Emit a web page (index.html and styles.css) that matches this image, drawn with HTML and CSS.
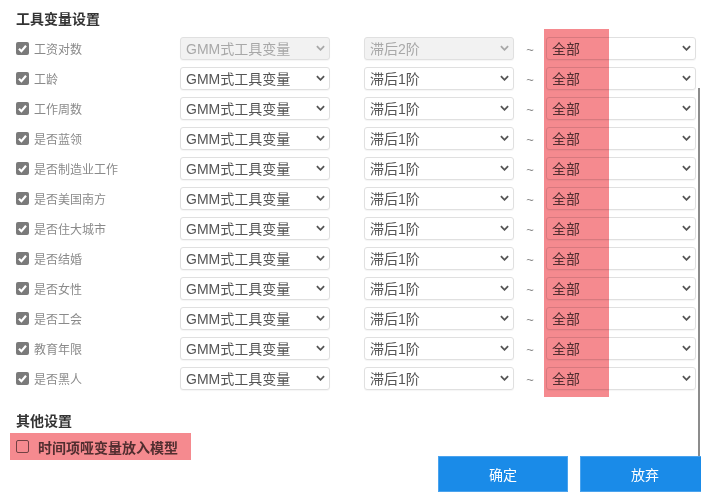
FILE: index.html
```html
<!DOCTYPE html>
<html lang="zh">
<head>
<meta charset="utf-8">
<link rel="stylesheet" href="styles.css">
</head>
<body>
<div class="page">
  <div class="panel">
    <div class="title">工具变量设置</div>
    <div class="rows">
      <div class="row">
        <label class="chk"><span class="box on"><svg viewBox="0 0 13 13"><path d="M3 6.8 L5.4 9.2 L10 3.8" /></svg></span><span class="lbl">工资对数</span></label>
        <div class="sel dis"><span>GMM式工具变量</span><svg class="chev" viewBox="0 0 10 6"><path d="M1 1 L5 5 L9 1"/></svg></div>
        <div class="gap"></div>
        <div class="sel dis"><span>滞后2阶</span><svg class="chev" viewBox="0 0 10 6"><path d="M1 1 L5 5 L9 1"/></svg></div>
        <div class="tilde">~</div>
        <div class="sel"><span>全部</span><svg class="chev" viewBox="0 0 10 6"><path d="M1 1 L5 5 L9 1"/></svg></div>
      </div>
      <div class="row">
        <label class="chk"><span class="box on"><svg viewBox="0 0 13 13"><path d="M3 6.8 L5.4 9.2 L10 3.8" /></svg></span><span class="lbl">工龄</span></label>
        <div class="sel"><span>GMM式工具变量</span><svg class="chev" viewBox="0 0 10 6"><path d="M1 1 L5 5 L9 1"/></svg></div>
        <div class="gap"></div>
        <div class="sel"><span>滞后1阶</span><svg class="chev" viewBox="0 0 10 6"><path d="M1 1 L5 5 L9 1"/></svg></div>
        <div class="tilde">~</div>
        <div class="sel"><span>全部</span><svg class="chev" viewBox="0 0 10 6"><path d="M1 1 L5 5 L9 1"/></svg></div>
      </div>
      <div class="row">
        <label class="chk"><span class="box on"><svg viewBox="0 0 13 13"><path d="M3 6.8 L5.4 9.2 L10 3.8" /></svg></span><span class="lbl">工作周数</span></label>
        <div class="sel"><span>GMM式工具变量</span><svg class="chev" viewBox="0 0 10 6"><path d="M1 1 L5 5 L9 1"/></svg></div>
        <div class="gap"></div>
        <div class="sel"><span>滞后1阶</span><svg class="chev" viewBox="0 0 10 6"><path d="M1 1 L5 5 L9 1"/></svg></div>
        <div class="tilde">~</div>
        <div class="sel"><span>全部</span><svg class="chev" viewBox="0 0 10 6"><path d="M1 1 L5 5 L9 1"/></svg></div>
      </div>
      <div class="row">
        <label class="chk"><span class="box on"><svg viewBox="0 0 13 13"><path d="M3 6.8 L5.4 9.2 L10 3.8" /></svg></span><span class="lbl">是否蓝领</span></label>
        <div class="sel"><span>GMM式工具变量</span><svg class="chev" viewBox="0 0 10 6"><path d="M1 1 L5 5 L9 1"/></svg></div>
        <div class="gap"></div>
        <div class="sel"><span>滞后1阶</span><svg class="chev" viewBox="0 0 10 6"><path d="M1 1 L5 5 L9 1"/></svg></div>
        <div class="tilde">~</div>
        <div class="sel"><span>全部</span><svg class="chev" viewBox="0 0 10 6"><path d="M1 1 L5 5 L9 1"/></svg></div>
      </div>
      <div class="row">
        <label class="chk"><span class="box on"><svg viewBox="0 0 13 13"><path d="M3 6.8 L5.4 9.2 L10 3.8" /></svg></span><span class="lbl">是否制造业工作</span></label>
        <div class="sel"><span>GMM式工具变量</span><svg class="chev" viewBox="0 0 10 6"><path d="M1 1 L5 5 L9 1"/></svg></div>
        <div class="gap"></div>
        <div class="sel"><span>滞后1阶</span><svg class="chev" viewBox="0 0 10 6"><path d="M1 1 L5 5 L9 1"/></svg></div>
        <div class="tilde">~</div>
        <div class="sel"><span>全部</span><svg class="chev" viewBox="0 0 10 6"><path d="M1 1 L5 5 L9 1"/></svg></div>
      </div>
      <div class="row">
        <label class="chk"><span class="box on"><svg viewBox="0 0 13 13"><path d="M3 6.8 L5.4 9.2 L10 3.8" /></svg></span><span class="lbl">是否美国南方</span></label>
        <div class="sel"><span>GMM式工具变量</span><svg class="chev" viewBox="0 0 10 6"><path d="M1 1 L5 5 L9 1"/></svg></div>
        <div class="gap"></div>
        <div class="sel"><span>滞后1阶</span><svg class="chev" viewBox="0 0 10 6"><path d="M1 1 L5 5 L9 1"/></svg></div>
        <div class="tilde">~</div>
        <div class="sel"><span>全部</span><svg class="chev" viewBox="0 0 10 6"><path d="M1 1 L5 5 L9 1"/></svg></div>
      </div>
      <div class="row">
        <label class="chk"><span class="box on"><svg viewBox="0 0 13 13"><path d="M3 6.8 L5.4 9.2 L10 3.8" /></svg></span><span class="lbl">是否住大城市</span></label>
        <div class="sel"><span>GMM式工具变量</span><svg class="chev" viewBox="0 0 10 6"><path d="M1 1 L5 5 L9 1"/></svg></div>
        <div class="gap"></div>
        <div class="sel"><span>滞后1阶</span><svg class="chev" viewBox="0 0 10 6"><path d="M1 1 L5 5 L9 1"/></svg></div>
        <div class="tilde">~</div>
        <div class="sel"><span>全部</span><svg class="chev" viewBox="0 0 10 6"><path d="M1 1 L5 5 L9 1"/></svg></div>
      </div>
      <div class="row">
        <label class="chk"><span class="box on"><svg viewBox="0 0 13 13"><path d="M3 6.8 L5.4 9.2 L10 3.8" /></svg></span><span class="lbl">是否结婚</span></label>
        <div class="sel"><span>GMM式工具变量</span><svg class="chev" viewBox="0 0 10 6"><path d="M1 1 L5 5 L9 1"/></svg></div>
        <div class="gap"></div>
        <div class="sel"><span>滞后1阶</span><svg class="chev" viewBox="0 0 10 6"><path d="M1 1 L5 5 L9 1"/></svg></div>
        <div class="tilde">~</div>
        <div class="sel"><span>全部</span><svg class="chev" viewBox="0 0 10 6"><path d="M1 1 L5 5 L9 1"/></svg></div>
      </div>
      <div class="row">
        <label class="chk"><span class="box on"><svg viewBox="0 0 13 13"><path d="M3 6.8 L5.4 9.2 L10 3.8" /></svg></span><span class="lbl">是否女性</span></label>
        <div class="sel"><span>GMM式工具变量</span><svg class="chev" viewBox="0 0 10 6"><path d="M1 1 L5 5 L9 1"/></svg></div>
        <div class="gap"></div>
        <div class="sel"><span>滞后1阶</span><svg class="chev" viewBox="0 0 10 6"><path d="M1 1 L5 5 L9 1"/></svg></div>
        <div class="tilde">~</div>
        <div class="sel"><span>全部</span><svg class="chev" viewBox="0 0 10 6"><path d="M1 1 L5 5 L9 1"/></svg></div>
      </div>
      <div class="row">
        <label class="chk"><span class="box on"><svg viewBox="0 0 13 13"><path d="M3 6.8 L5.4 9.2 L10 3.8" /></svg></span><span class="lbl">是否工会</span></label>
        <div class="sel"><span>GMM式工具变量</span><svg class="chev" viewBox="0 0 10 6"><path d="M1 1 L5 5 L9 1"/></svg></div>
        <div class="gap"></div>
        <div class="sel"><span>滞后1阶</span><svg class="chev" viewBox="0 0 10 6"><path d="M1 1 L5 5 L9 1"/></svg></div>
        <div class="tilde">~</div>
        <div class="sel"><span>全部</span><svg class="chev" viewBox="0 0 10 6"><path d="M1 1 L5 5 L9 1"/></svg></div>
      </div>
      <div class="row">
        <label class="chk"><span class="box on"><svg viewBox="0 0 13 13"><path d="M3 6.8 L5.4 9.2 L10 3.8" /></svg></span><span class="lbl">教育年限</span></label>
        <div class="sel"><span>GMM式工具变量</span><svg class="chev" viewBox="0 0 10 6"><path d="M1 1 L5 5 L9 1"/></svg></div>
        <div class="gap"></div>
        <div class="sel"><span>滞后1阶</span><svg class="chev" viewBox="0 0 10 6"><path d="M1 1 L5 5 L9 1"/></svg></div>
        <div class="tilde">~</div>
        <div class="sel"><span>全部</span><svg class="chev" viewBox="0 0 10 6"><path d="M1 1 L5 5 L9 1"/></svg></div>
      </div>
      <div class="row">
        <label class="chk"><span class="box on"><svg viewBox="0 0 13 13"><path d="M3 6.8 L5.4 9.2 L10 3.8" /></svg></span><span class="lbl">是否黑人</span></label>
        <div class="sel"><span>GMM式工具变量</span><svg class="chev" viewBox="0 0 10 6"><path d="M1 1 L5 5 L9 1"/></svg></div>
        <div class="gap"></div>
        <div class="sel"><span>滞后1阶</span><svg class="chev" viewBox="0 0 10 6"><path d="M1 1 L5 5 L9 1"/></svg></div>
        <div class="tilde">~</div>
        <div class="sel"><span>全部</span><svg class="chev" viewBox="0 0 10 6"><path d="M1 1 L5 5 L9 1"/></svg></div>
      </div>
    </div>
    <div class="title other">其他设置</div>
    <div class="hl">
      <span class="box off"></span><span class="hl-text">时间项哑变量放入模型</span>
    </div>
  </div>
  <div class="mark"></div>
  <div class="scrollbar"></div>
  <div class="footer">
    <button class="btn">确定</button>
    <button class="btn">放弃</button>
  </div>
</div>
</body>
</html>
```

FILE: styles.css
```css
html, body {
  margin: 0;
  padding: 0;
  background: #fff;
}
body {
  width: 701px;
  height: 494px;
  overflow: hidden;
  font-family: "Liberation Sans", "Noto Sans CJK SC", sans-serif;
}
.page {
  position: relative;
  width: 701px;
  height: 494px;
  overflow: hidden;
  isolation: isolate;
}
.panel {
  padding: 10px 0 0 16px;
}
.title {
  font-size: 14px;
  font-weight: bold;
  color: #333;
  line-height: 18px;
  height: 18px;
  margin-bottom: 5px;
}
.title.other {
  margin-top: 19px;
  margin-bottom: 3px;
}
.row {
  display: flex;
  align-items: center;
  height: 30px;
}
.chk {
  width: 164px;
  display: flex;
  align-items: center;
  gap: 5px;
}
.box {
  width: 13px;
  height: 13px;
  box-sizing: border-box;
  border-radius: 2px;
  display: block;
  flex: none;
}
.box.on {
  background: #7a7a7a;
}
.box.on svg {
  display: block;
  width: 13px;
  height: 13px;
}
.box.on path {
  fill: none;
  stroke: #fff;
  stroke-width: 2.2;
}
.box.off {
  border: 1px solid #777;
  background: #fff;
}
.lbl {
  font-size: 12px;
  color: #8a8a8a;
  line-height: 14px;
  margin-top: 3px;
}
.sel {
  width: 150px;
  height: 23px;
  box-sizing: border-box;
  border: 1px solid #e0e0e0;
  border-radius: 3px;
  background: #fff;
  display: flex;
  align-items: center;
  justify-content: space-between;
  padding: 0 4px 0 5px;
  font-size: 14px;
  color: #555;
  box-shadow: 0 1px 1px rgba(0,0,0,0.04);
}
.sel.dis {
  background: #f2f2f2;
  color: #a8a8a8;
}
.chev {
  width: 9px;
  height: 6px;
  display: block;
}
.chev path {
  fill: none;
  stroke: #555;
  stroke-width: 2;
}
.sel.dis .chev path {
  stroke: #a8a8a8;
}
.gap {
  width: 34px;
}
.tilde {
  width: 32px;
  text-align: center;
  font-size: 13px;
  color: #888;
  padding-top: 3px;
}
.hl {
  position: relative;
  margin-left: -6px;
  width: 181px;
  height: 27px;
  box-sizing: border-box;
  padding-left: 6px;
  display: flex;
  align-items: center;
  gap: 9px;
}
.hl::after {
  content: "";
  position: absolute;
  inset: 0;
  background: #f58a8f;
  mix-blend-mode: multiply;
}
.hl-text {
  font-size: 14px;
  font-weight: bold;
  color: #555;
}
.mark {
  position: absolute;
  left: 544px;
  top: 29px;
  width: 65px;
  height: 368px;
  background: #f58a8f;
  mix-blend-mode: multiply;
}
.scrollbar {
  position: absolute;
  left: 698px;
  top: 88px;
  width: 2px;
  height: 368px;
  background: #8c8c8c;
}
.footer {
  position: absolute;
  left: 438px;
  top: 456px;
  display: flex;
  gap: 12px;
}
.btn {
  width: 130px;
  height: 36px;
  border: 1px solid #4aa3ee;
  background: #1a8be8;
  color: #fff;
  font-family: "Liberation Sans", "Noto Sans CJK SC", sans-serif;
  font-size: 14px;
  padding: 0;
  flex: none;
}
```
